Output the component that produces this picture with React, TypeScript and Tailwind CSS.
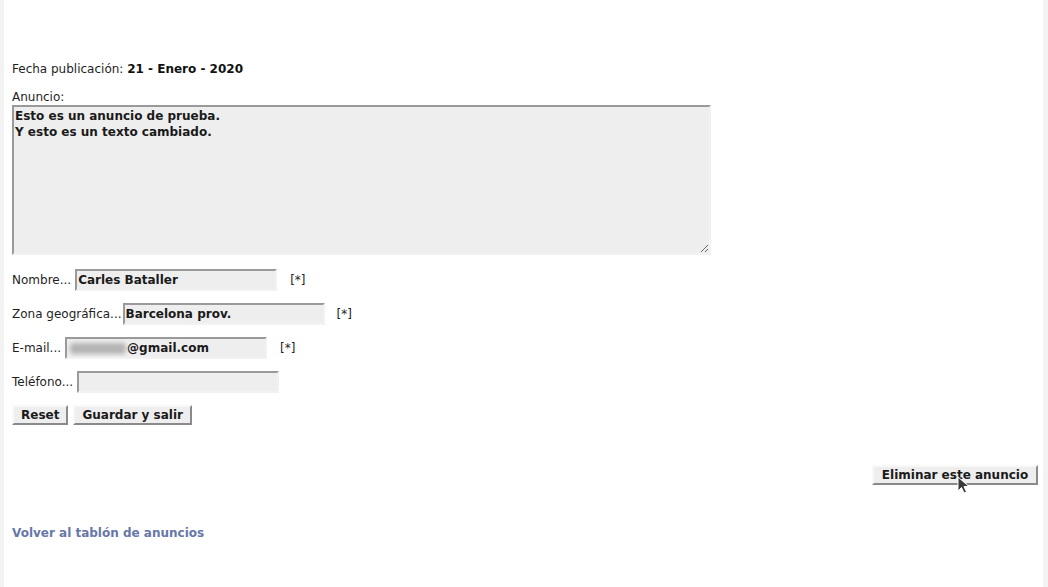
export default function App() {
  const inputCls =
    "h-[22px] w-[202px] bg-[#eeeeee] border-2 border-t-[#9a9a9a] border-l-[#9a9a9a] border-b-[#f2f2f2] border-r-[#f2f2f2] px-[1px] font-bold text-[#1a1a1a] text-[12px] outline-none";
  const btnCls =
    "h-[20px] whitespace-nowrap bg-[#eeeeee] border-2 border-t-[#f8f8f8] border-l-[#f8f8f8] border-b-[#8a8a8a] border-r-[#8a8a8a] px-[7px] font-bold text-[12px] text-[#1a1a1a] leading-none";

  return (
    <div className="flex min-h-[587px] w-full bg-white font-['DejaVu_Sans',sans-serif] text-[12px] text-[#1e1e1e]">
      <div className="w-[4px] shrink-0 bg-[#f3f3f3]" />
      <div className="relative flex-1 pl-[8px] pt-[61px] pr-[5px]">
        <div className="h-[16px] leading-[16px]">
          Fecha publicación: <b className="text-[#111]">21 - Enero - 2020</b>
        </div>
        <div className="mt-[12px] h-[16px] leading-[16px]">Anuncio:</div>
        <textarea
          className="block h-[150px] w-[699px] bg-[#eeeeee] border-2 border-t-[#9a9a9a] border-l-[#9a9a9a] border-b-[#f2f2f2] border-r-[#f2f2f2] px-[1px] pt-[1px] pb-0 font-bold text-[12px] leading-[16px] text-[#1a1a1a] outline-none"
          defaultValue={"Esto es un anuncio de prueba.\nY esto es un texto cambiado."}
        />

        <div className="mt-[14px] flex flex-col gap-[12px]">
          <div className="flex h-[22px] items-center">
            <span className="mr-[4px]">Nombre...</span>
            <input className={inputCls} defaultValue="Carles Bataller" />
            <span className="ml-[13px]">[*]</span>
          </div>
          <div className="flex h-[22px] items-center">
            <span className="mr-[1px]">Zona geográfica...</span>
            <input className={inputCls} defaultValue="Barcelona prov." />
            <span className="ml-[12px]">[*]</span>
          </div>
          <div className="flex h-[22px] items-center">
            <span className="mr-[4px]">E-mail...</span>
            <div className={inputCls + " relative flex items-center overflow-hidden"}>
              <span className="ml-[2px] mr-[1px] inline-block h-[11px] w-[56px] rounded-sm bg-[#b4b4b4] blur-[2px]" />
              <span>@gmail.com</span>
            </div>
            <span className="ml-[13px]">[*]</span>
          </div>
          <div className="flex h-[22px] items-center">
            <span className="mr-[4px]">Teléfono...</span>
            <input className={inputCls} defaultValue="" />
          </div>
        </div>

        <div className="mt-[12px] flex gap-[5px]">
          <button className={btnCls}>Reset</button>
          <button className={btnCls}>Guardar y salir</button>
        </div>

        <div className="mt-[40px] flex justify-end">
          <div className="relative">
            <button className={btnCls + " w-[166px]"}>Eliminar este anuncio</button>
            <svg
              className="absolute left-[85px] top-[11px]"
              width="16"
              height="20"
              viewBox="0 0 16 20"
            >
              <path
                d="M1 1 L1 15 L4.5 11.5 L7 17 L9.5 16 L7 10.5 L12 10.5 Z"
                fill="#3a3a3a"
                stroke="#ffffff"
                strokeWidth="1"
                strokeLinejoin="round"
              />
            </svg>
          </div>
        </div>

        <div className="mt-[40px] h-[16px] leading-[16px]">
          <a href="#" className="font-bold text-[#6877a9] no-underline">
            Volver al tablón de anuncios
          </a>
        </div>
      </div>
      <div className="w-[5px] shrink-0 bg-[#f3f3f3]" />
    </div>
  );
}
